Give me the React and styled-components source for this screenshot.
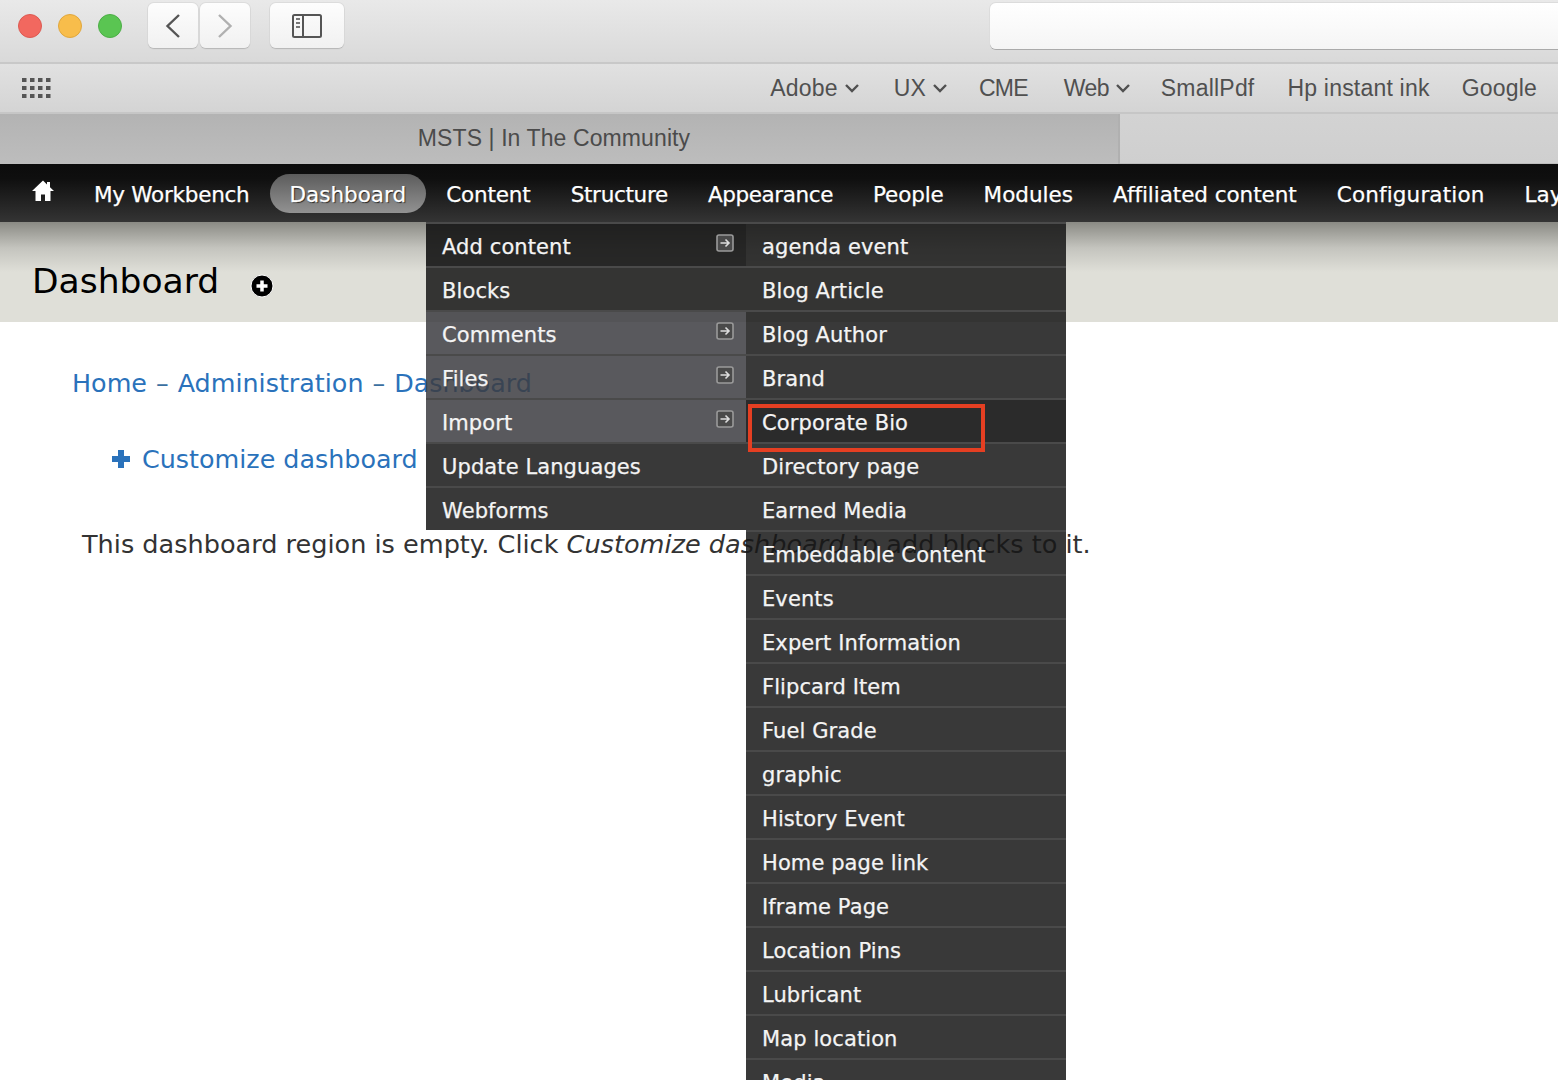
import styled, { createGlobalStyle } from "styled-components"

const GlobalStyle = createGlobalStyle`
  html, body {
    margin: 0;
    padding: 0;
    background: #fff;
    overflow: hidden;
  }
  * {
    box-sizing: border-box;
  }
`
const Page = styled.div`
  width: 1558px;
  height: 1080px;
  overflow: hidden;
  position: relative;
  font-family: "DejaVu Sans", sans-serif;
`
const TitleBar = styled.div`
  height: 64px;
  display: flex;
  align-items: flex-start;
  padding-top: 3px;
  background: linear-gradient(#e9e9e9, #d9d9d9);
  border-bottom: 2px solid #c8c8c8;
`
const Lights = styled.div`
  display: flex;
  flex-shrink: 0;
  gap: 16px;
  margin: 11px 0 0 18px;
`
const Light = styled.span`
  width: 24px;
  height: 24px;
  border-radius: 50%;
  background: ${({ $color }) => $color};
  border: 1px solid ${({ $edge }) => $edge};
`
const NavButtons = styled.div`
  display: flex;
  flex-shrink: 0;
  gap: 2px;
  margin-left: 26px;
`
const WinButton = styled.div`
  width: ${({ $width }) => $width}px;
  height: 45px;
  flex-shrink: 0;
  display: flex;
  align-items: center;
  justify-content: center;
  border-radius: 6px;
  background: linear-gradient(#fdfdfd, #f1f1f1);
  box-shadow: 0 1px 1px #b5b5b5, 0 0 0 1px #dcdcdc;
`
const SideButton = styled(WinButton)`
  margin-left: 20px;
`
const AddressBar = styled.div`
  width: 600px;
  height: 46px;
  flex-shrink: 0;
  margin-left: 646px;
  border-radius: 6px 0 0 6px;
  background: linear-gradient(#fff, #f5f5f5);
  box-shadow: 0 1px 0 #aaa, 0 0 0 1px #dcdcdc;
`
const BookmarkBar = styled.div`
  height: 50px;
  display: flex;
  align-items: center;
  padding: 0 21px 0 22px;
  background: linear-gradient(#e1e1e1, #d4d4d4);
  border-bottom: 2px solid #c6c6c6;
`
const Grid = styled.svg`
  margin-right: auto;
`
const Bookmark = styled.span`
  display: flex;
  align-items: center;
  gap: 6px;
  margin-left: ${({ $gap }) => $gap}px;
  font-family: "Liberation Sans", sans-serif;
  font-size: 23px;
  letter-spacing: ${({ $spacing }) => $spacing ?? 0.2}px;
  color: #505050;
`
const TabBar = styled.div`
  height: 50px;
  display: flex;
`
const ActiveTab = styled.div`
  width: 1120px;
  display: flex;
  align-items: center;
  justify-content: center;
  font-family: "Liberation Sans", sans-serif;
  font-size: 23px;
  letter-spacing: 0.1px;
  color: #4b4b4b;
  background: linear-gradient(#b3b3b3, #bdbdbd);
  border-right: 2px solid #b0b0b0;
  padding: 0 10px 1px 0;
`
const IdleTab = styled.div`
  flex: 1;
  background: linear-gradient(#d3d3d3, #cfcfcf);
  border-bottom: 1px solid #bdbdbd;
`
const AdminNav = styled.nav`
  height: 58px;
  display: flex;
  align-items: center;
  white-space: nowrap;
  padding-left: 20px;
  background: linear-gradient(#0c0c0c 0, #0f0f0f 25%, #343434 100%);
`
const HomeLink = styled.span`
  display: flex;
  flex-shrink: 0;
  width: 54px;
  padding-left: 11px;
  margin-top: -4px;
`
const NavItem = styled.span`
  flex-shrink: 0;
  height: 39px;
  line-height: 41px;
  padding: 0 20px;
  border-radius: 20px;
  font-size: 21.5px;
  letter-spacing: ${({ $spacing }) => $spacing ?? 0}px;
  -webkit-text-stroke: 0.25px #fff;
  color: #fff;
  background: ${({ $active }) => ($active ? "linear-gradient(#5c5c5c, #929292)" : "none")};
  text-shadow: ${({ $active }) => ($active ? "1px 1px 1px #222" : "none")};
`
const Header = styled.header`
  height: 100px;
  display: flex;
  align-items: center;
  gap: 31px;
  padding: 18px 0 0 32px;
  background: linear-gradient(#8a8a84 0, #c4c4be 26%, #dfdfd8 50%, #dfdfd8 100%);
`
const Title = styled.h1`
  margin: 0;
  font-size: 34.5px;
  font-weight: 400;
  color: #000;
`
const AddShortcut = styled.svg`
  margin-top: 10px;
`
const Content = styled.main`
  padding: 44px 0 0 72px;
`
const Breadcrumb = styled.div`
  display: flex;
  gap: 9px;
  font-size: 25.4px;
  line-height: 34px;
  color: #2a72bb;
`
const Sep = styled.span`
  color: #3b6f9f;
`
const ActionLink = styled.div`
  display: flex;
  align-items: center;
  gap: 11px;
  margin: 42px 0 0 39px;
  font-size: 25.4px;
  line-height: 34px;
  color: #2a72bb;
`
const Empty = styled.p`
  margin: 51px 0 0 10px;
  font-size: 25.55px;
  line-height: 34px;
  color: #333;
  white-space: nowrap;
`
const Dropdown = styled.ul`
  position: absolute;
  top: 222px;
  left: ${({ $left }) => $left}px;
  width: 320px;
  margin: 0;
  padding: 0;
  list-style: none;
`
const toneColors = {
  open: "rgba(20,20,20,0.9)",
  hover: "rgba(60,60,65,0.85)",
  plain: "rgba(22,22,22,0.85)",
}
const MenuRow = styled.li`
  height: 44px;
  display: flex;
  align-items: center;
  justify-content: space-between;
  padding: 4px 12px 0 16px;
  font-size: 21px;
  letter-spacing: 0.1px;
  -webkit-text-stroke: 0.25px #f4f4f4;
  color: #f4f4f4;
  background: ${({ $tone }) => toneColors[$tone ?? "plain"]};
  border-top: 2px solid #4a4a4a;
`
const ArrowSlot = styled.span`
  display: flex;
  margin-top: -8px;
`
const Highlight = styled.div`
  position: absolute;
  left: 748px;
  top: 404px;
  width: 237px;
  height: 48px;
  border: 4px solid #e53f22;
`

const ArrowBox = () => (
  <ArrowSlot>
    <svg width="18" height="18" viewBox="0 0 18 18">
      <rect x="1" y="1" width="16" height="16" rx="2" fill="#4a4a4a" stroke="#9a9a9a" strokeWidth="1.6" />
      <path d="M4.500 9H13M9.500 5.500L13 9l-3.500 3.500" fill="none" stroke="#ddd" strokeWidth="1.6" />
    </svg>
  </ArrowSlot>
)

const Chevron = () => (
  <svg width="16" height="10" viewBox="0 0 16 10">
    <path d="M2 2l6 6 6-6" fill="none" stroke="#505050" strokeWidth="2.4" />
  </svg>
)

const firstLevel = [
  { label: "Add content", tone: "open", arrow: true },
  { label: "Blocks" },
  { label: "Comments", tone: "hover", arrow: true },
  { label: "Files", tone: "hover", arrow: true },
  { label: "Import", tone: "hover", arrow: true },
  { label: "Update Languages" },
  { label: "Webforms" },
]

const secondLevel = [
  "agenda event",
  "Blog Article",
  "Blog Author",
  "Brand",
  "Corporate Bio",
  "Directory page",
  "Earned Media",
  "Embeddable Content",
  "Events",
  "Expert Information",
  "Flipcard Item",
  "Fuel Grade",
  "graphic",
  "History Event",
  "Home page link",
  "Iframe Page",
  "Location Pins",
  "Lubricant",
  "Map location",
  "Media",
]

const navItems = [
  { label: "Content", spacing: -0.15 },
  { label: "Structure", spacing: -0.3 },
  { label: "Appearance", spacing: -0.4 },
  { label: "People", spacing: -0.15 },
  { label: "Modules" },
  { label: "Affiliated content", spacing: -0.05 },
  { label: "Configuration", spacing: 0.15 },
  { label: "Layout" },
]

const App = () => {
  return (
    <Page>
      <GlobalStyle />
      <TitleBar>
        <Lights>
          <Light $color="#f2685f" $edge="#dc5a52" />
          <Light $color="#f8bd4b" $edge="#e0a73d" />
          <Light $color="#5ac552" $edge="#4cae46" />
        </Lights>
        <NavButtons>
          <WinButton $width={50}>
            <svg width="16" height="26" viewBox="0 0 16 26">
              <path d="M14 2L2.500 13 14 24" fill="none" stroke="#555" strokeWidth="2.4" />
            </svg>
          </WinButton>
          <WinButton $width={50}>
            <svg width="16" height="26" viewBox="0 0 16 26">
              <path d="M2 2l11.500 11L2 24" fill="none" stroke="#b0b0b0" strokeWidth="2.4" />
            </svg>
          </WinButton>
        </NavButtons>
        <SideButton $width={74}>
          <svg width="30" height="24" viewBox="0 0 30 24">
            <rect x="1" y="1" width="28" height="22" rx="1.500" fill="none" stroke="#555" strokeWidth="2" />
            <path d="M11 1v22" stroke="#555" strokeWidth="2" />
            <path d="M4 5h4M4 9h4M4 13h4" stroke="#777" strokeWidth="2" />
          </svg>
        </SideButton>
        <AddressBar />
      </TitleBar>
      <BookmarkBar>
        <Grid width="30" height="22" viewBox="0 0 30 22" fill="#555">
          {[1, 9, 17].map((y) =>
            [0, 8, 16, 24].map((x) => <rect key={`${x}-${y}`} x={x} y={y} width="4.500" height="4" />)
          )}
        </Grid>
        <Bookmark $gap={0}>Adobe <Chevron /></Bookmark>
        <Bookmark $gap={34}>UX <Chevron /></Bookmark>
        <Bookmark $gap={31} $spacing={-0.8}>CME</Bookmark>
        <Bookmark $gap={36} $spacing={-0.6}>Web <Chevron /></Bookmark>
        <Bookmark $gap={30}>SmallPdf</Bookmark>
        <Bookmark $gap={33}>Hp instant ink</Bookmark>
        <Bookmark $gap={32}>Google</Bookmark>
      </BookmarkBar>
      <TabBar>
        <ActiveTab>MSTS | In The Community</ActiveTab>
        <IdleTab />
      </TabBar>
      <AdminNav>
        <HomeLink>
          <svg width="24" height="24" viewBox="0 0 24 24" fill="#fff">
            <path d="M12 1.500L1 12h3.500v10h5.500v-6.500h4V22h5.500V12H23l-4-3.800V3h-3v2.400z" />
          </svg>
        </HomeLink>
        <NavItem $spacing={-0.25}>My Workbench</NavItem>
        <NavItem $active>Dashboard</NavItem>
        {navItems.map((item) => (
          <NavItem key={item.label} $spacing={item.spacing}>{item.label}</NavItem>
        ))}
      </AdminNav>
      <Header>
        <Title>Dashboard</Title>
        <AddShortcut width="24" height="24" viewBox="0 0 24 24">
          <circle cx="12" cy="12" r="11" fill="#000" stroke="#fff" strokeWidth="1" />
          <path d="M12 6.500v11M6.500 12h11" stroke="#fff" strokeWidth="3.500" />
        </AddShortcut>
      </Header>
      <Content>
        <Breadcrumb>
          <span>Home</span>
          <Sep>–</Sep>
          <span>Administration</span>
          <Sep>–</Sep>
          <span>Dashboard</span>
        </Breadcrumb>
        <ActionLink>
          <svg width="20" height="20" viewBox="0 0 20 20" fill="#2a72bb">
            <path d="M7 1h6v6h6v6h-6v6H7v-6H1V7h6z" />
          </svg>
          Customize dashboard
        </ActionLink>
        <Empty>
          This dashboard region is empty. Click <em>Customize dashboard</em> to add blocks to it.
        </Empty>
      </Content>
      <Dropdown $left={426}>
        {firstLevel.map((row) => (
          <MenuRow key={row.label} $tone={row.tone}>
            {row.label}
            {row.arrow && <ArrowBox />}
          </MenuRow>
        ))}
      </Dropdown>
      <Dropdown $left={746}>
        {secondLevel.map((label, i) => (
          <MenuRow key={label} $tone={i === 4 ? "open" : undefined}>
            {label}
          </MenuRow>
        ))}
      </Dropdown>
      <Highlight />
    </Page>
  )
}

export default App
